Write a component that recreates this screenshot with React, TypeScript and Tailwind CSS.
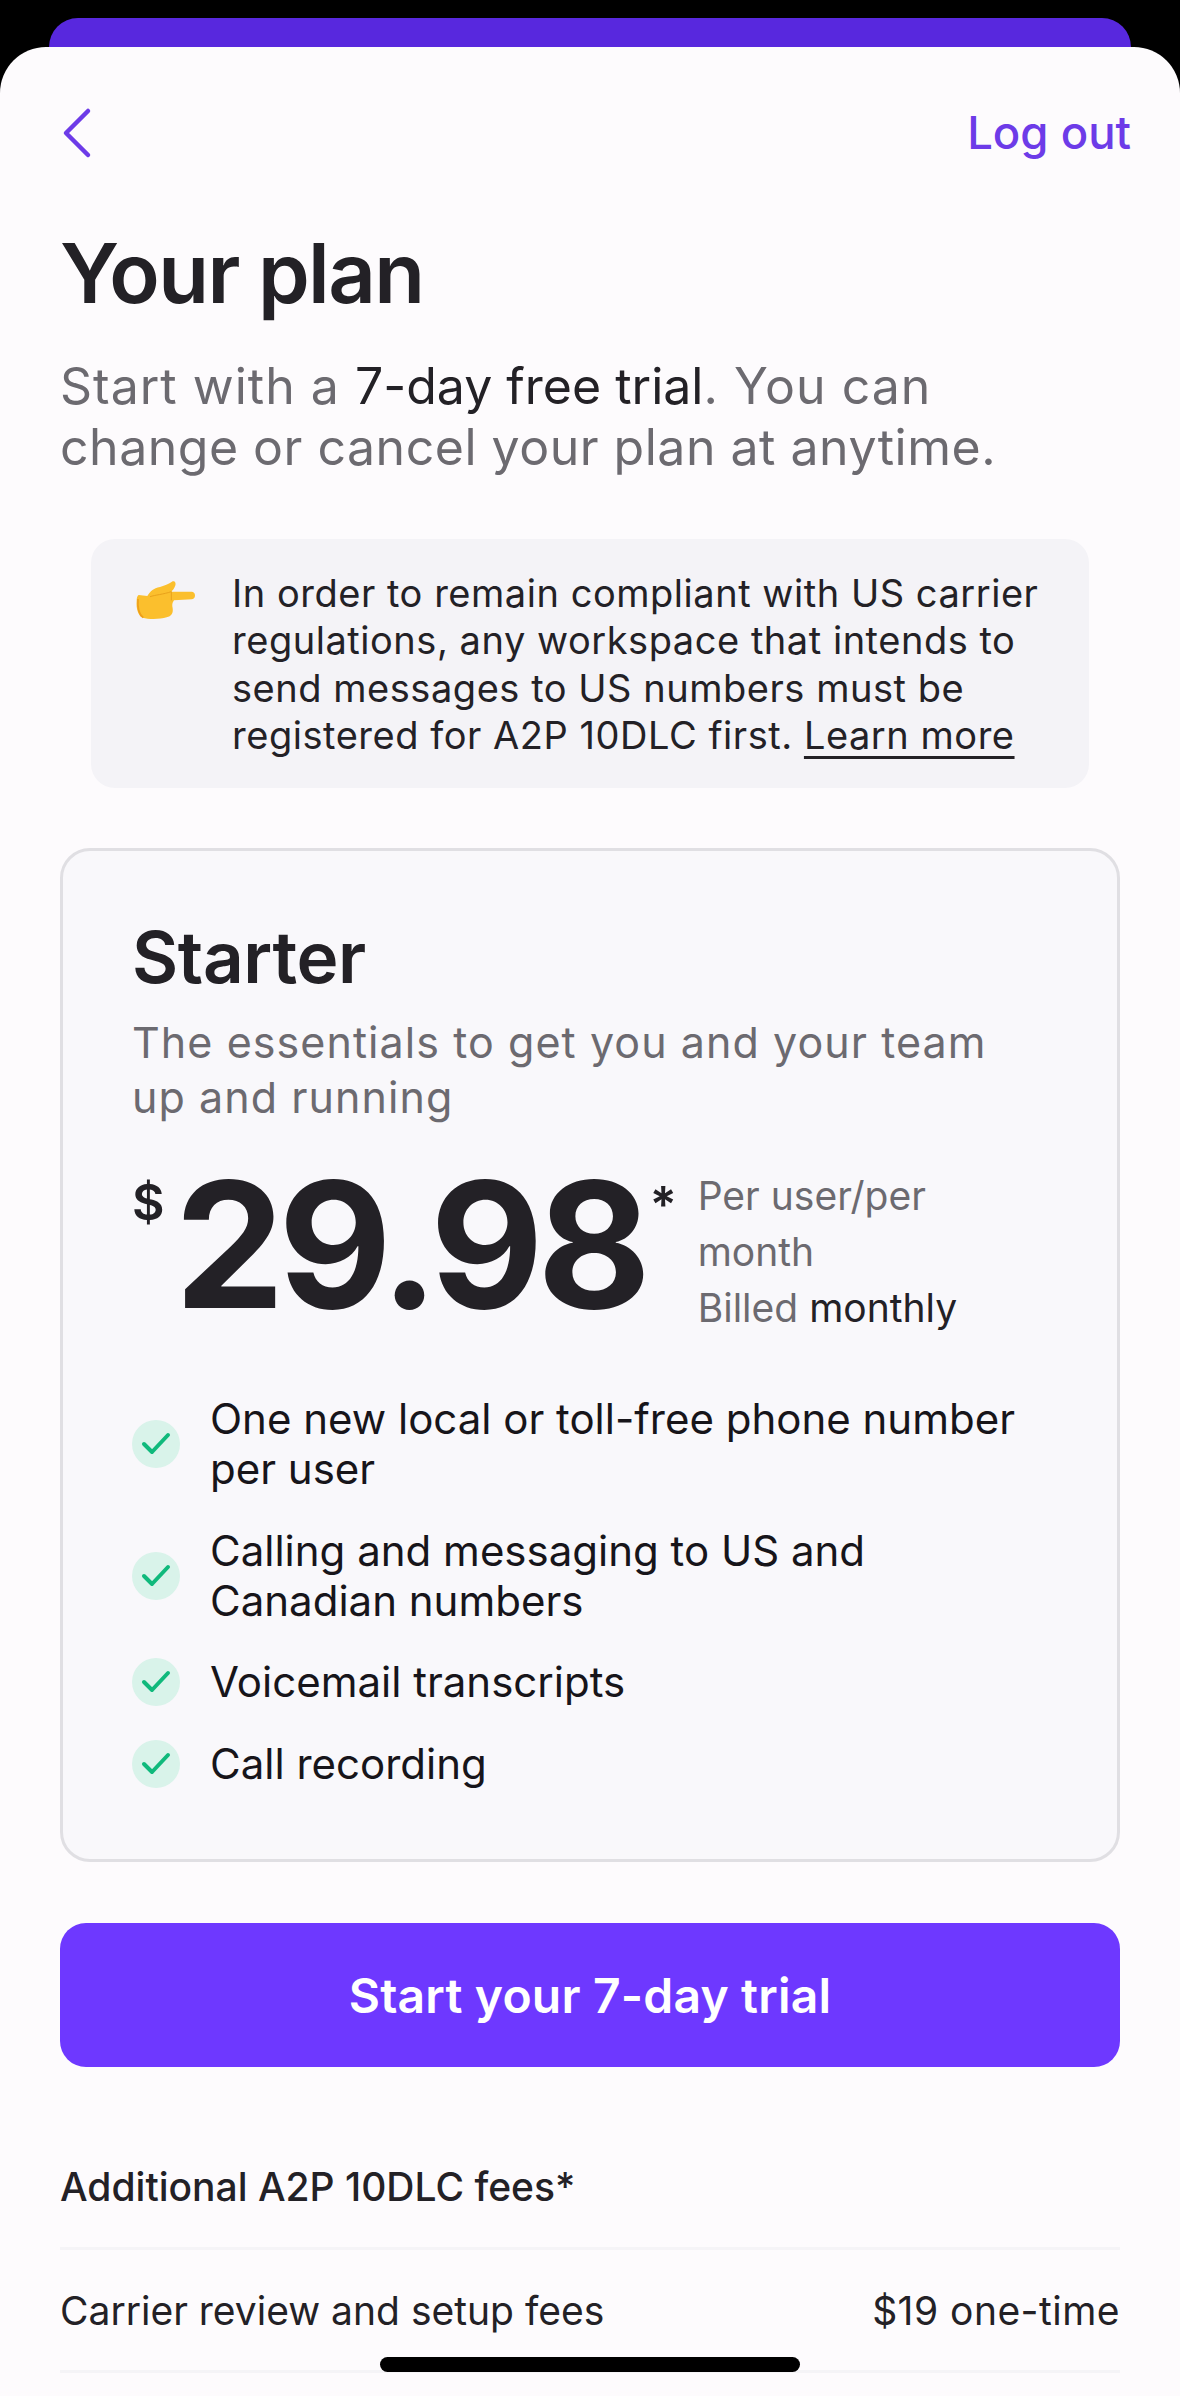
import React from 'react';

function Chevron() {
  return (
    <svg width="34" height="52" viewBox="0 0 34 52" fill="none" className="block">
      <path d="M28 4 L6 26 L28 48" stroke="#6d3be8" strokeWidth="4.5" strokeLinecap="round" strokeLinejoin="round" />
    </svg>
  );
}

function PointingHand() {
  return (
    <svg width="60" height="40" viewBox="78 56 180 118" className="block">
      <path
        d="M86 100 L112 103 C120 90 130 80 150 76 C165 72 178 66 188 59 C196 57 199 66 195 74 C192 82 188 86 184 90 L246 90 C258 92 258 110 246 113 L192 116 C186 124 186 130 188 140 C190 155 184 164 170 167 C150 173 115 173 98 168 C84 162 78 140 80 118 C80 108 82 102 86 100 Z"
        fill="#fbbf2d"
      />
      <path d="M184 90 L184 116 M120 105 C135 100 160 98 184 90" stroke="#e9a21b" strokeWidth="3" fill="none" />
      <path d="M100 168 C88 160 82 140 84 112" stroke="#ee9f1a" strokeWidth="5" fill="none" />
    </svg>
  );
}

function Check() {
  return (
    <span className="flex h-[48px] w-[48px] shrink-0 items-center justify-center rounded-full bg-[#d9f3ea]">
      <svg width="30" height="24" viewBox="0 0 30 24" fill="none">
        <path d="M3 12 L11 20 L27 3" stroke="#10b97c" strokeWidth="4" strokeLinecap="round" strokeLinejoin="round" />
      </svg>
    </span>
  );
}

const features = [
  'One new local or toll-free phone number per user',
  'Calling and messaging to US and Canadian numbers',
  'Voicemail transcripts',
  'Call recording',
];

export default function App() {
  return (
    <div className="relative h-[2396px] w-[1180px] overflow-hidden bg-black pt-[18px] font-['Inter',sans-serif]">
      <div className="mx-[49px] h-[29px] rounded-t-[30px] bg-[#5828de]" />
      <div className="h-[2349px] rounded-t-[46px] bg-[#fdfbfd] px-[60px] pt-[58px] text-[#232126]">
        <div className="-mr-[11px] flex h-[56px] items-center justify-between">
          <Chevron />
          <span className="text-[45.5px] leading-[56px] font-medium text-[#6d3be8]">Log out</span>
        </div>

        <h1 className="mt-[64px] text-[83px] leading-[96px] font-semibold tracking-[-0.02em]">Your plan</h1>
        <p className="mt-[35px] text-[50px] leading-[61px] tracking-[0.02em] text-[#6c6a70]">
          Start with a <span className="tracking-normal text-[#232126]">7-day free trial</span>. You can
          <br />
          <span className="tracking-[0.01em]">change or cancel your plan at anytime.</span>
        </p>

        <div className="mx-[31px] mt-[61px] flex h-[249px] rounded-[24px] bg-[#f4f3f7] pt-[31px] pl-[45px]">
          <div className="w-[96px] shrink-0 pt-[10px]">
            <PointingHand />
          </div>
          <p className="text-[38px] leading-[47.3px] tracking-[0.014em]">
            In order to remain compliant with US carrier
            <br />
            regulations, any workspace that intends to
            <br />
            send messages to US numbers must be
            <br />
            registered for A2P 10DLC first.{' '}
            <span className="underline decoration-[3px] underline-offset-[7px]">Learn more</span>
          </p>
        </div>

        <div className="mt-[60px] h-[1014px] rounded-[30px] border-[3px] border-[#e0dfe3] bg-[#f9f8fb] px-[69px] pt-[66px]">
          <h2 className="text-[71px] leading-[80px] font-semibold tracking-[-0.005em]">Starter</h2>
          <p className="mt-[18px] text-[43px] leading-[55px] tracking-[0.025em] text-[#6c6a70]">
            The essentials to get you and your team
            <br />
            up and running
          </p>

          <div className="mt-[42px] flex items-start">
            <span className="mt-[10px] text-[50px] leading-[50px] font-semibold">$</span>
            <span className="mt-[12px] ml-[10px] text-[175px] leading-[130px] font-bold tracking-[-0.037em]">29.98</span>
            <span className="mt-[12px] ml-[5px] text-[50px] leading-[50px] font-semibold">*</span>
            <div className="mt-[1px] ml-[21px] text-[39px] leading-[56px] text-[#6c6a70]">
              Per user/per
              <br />
              month
              <br />
              Billed <span className="text-[#232126]">monthly</span>
            </div>
          </div>

          <ul className="mt-[58px] flex flex-col gap-[31.5px]">
            {features.map((text) => (
              <li key={text} className="flex items-center gap-[30px] text-[42px] leading-[50px] text-[#17151a]">
                <Check />
                <span>{text}</span>
              </li>
            ))}
          </ul>
        </div>

        <button className="mt-[61px] flex h-[144px] w-full items-center justify-center rounded-[26px] bg-[#6e38ff] pt-[2px] text-[48px] font-semibold tracking-[0.004em] text-white">
          Start your 7-day trial
        </button>

        <div className="mt-[95px] text-[39px] leading-[50px] font-medium">Additional A2P 10DLC fees*</div>
        <div className="mt-[35px] h-[3px] bg-[#f5f4f7]" />
        <div className="mt-[36px] flex justify-between text-[39px] leading-[50px]">
          <span>Carrier review and setup fees</span>
          <span className="tracking-[0.012em]">$19 one-time</span>
        </div>
        <div className="mt-[34px] h-[3px] bg-[#f5f4f7]" />
      </div>
      <div className="absolute top-[2357px] left-[380px] h-[15px] w-[420px] rounded-full bg-black" />
    </div>
  );
}
